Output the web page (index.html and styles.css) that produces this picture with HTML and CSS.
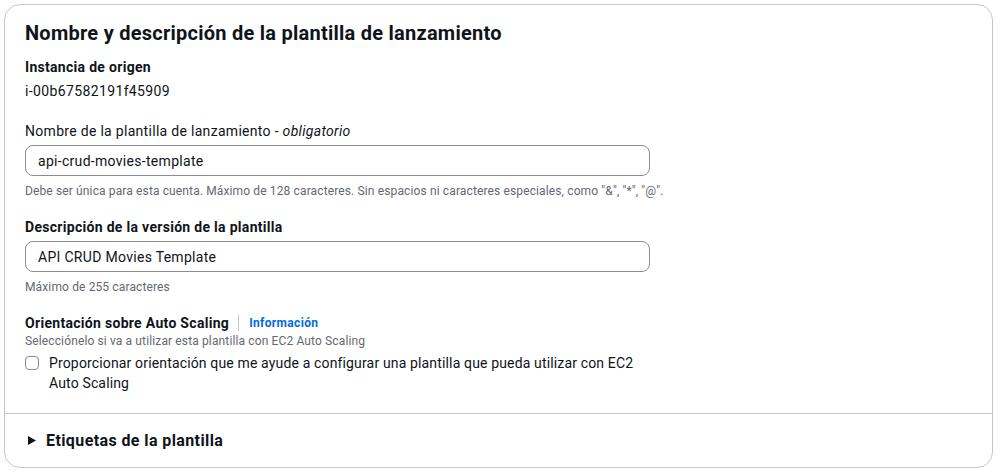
FILE: index.html
```html
<!DOCTYPE html>
<html lang="es">
<head>
<meta charset="utf-8">
<link rel="stylesheet" href="styles.css">
</head>
<body>
<div class="container">
  <div class="main">
    <h2 class="title">Nombre y descripción de la plantilla de lanzamiento</h2>
    <div class="field field-info">
      <div class="label bold">Instancia de origen</div>
      <div class="value">i-00b67582191f45909</div>
    </div>
    <div class="field">
      <div class="label">Nombre de la plantilla de lanzamiento - <i>obligatorio</i></div>
      <div class="input">api-crud-movies-template</div>
      <div class="hint">Debe ser única para esta cuenta. Máximo de 128 caracteres. Sin espacios ni caracteres especiales, como "&amp;", "*", "@".</div>
    </div>
    <div class="field">
      <div class="label bold">Descripción de la versión de la plantilla</div>
      <div class="input">API CRUD Movies Template</div>
      <div class="hint">Máximo de 255 caracteres</div>
    </div>
    <div class="field last">
      <div class="label-row">
        <span class="label bold">Orientación sobre Auto Scaling</span>
        <span class="sep"></span>
        <a class="info">Información</a>
      </div>
      <div class="hint desc">Selecciónelo si va a utilizar esta plantilla con EC2 Auto Scaling</div>
      <label class="check">
        <span class="box"></span>
        <span class="check-text">Proporcionar orientación que me ayude a configurar una plantilla que pueda utilizar con EC2 Auto Scaling</span>
      </label>
    </div>
  </div>
  <div class="footer">
    <svg class="caret" width="8" height="9" viewBox="0 0 8 9"><path d="M0 0 L8 4.5 L0 9 Z" fill="#0f141a"/></svg>
    <span class="footer-title">Etiquetas de la plantilla</span>
  </div>
</div>
</body>
</html>
```
FILE: styles.css
```css
* { box-sizing: border-box; }
body {
  margin: 0;
  padding: 4px;
  background: #ffffff;
  font-family: Roboto, "Open Sans", sans-serif;
  color: #0f141a;
  font-size: 14px;
  letter-spacing: 0.3px;
}
.container {
  width: 989px;
  height: 464px;
  border: 1px solid #c6c6cd;
  border-radius: 16px;
  display: flex;
  flex-direction: column;
}
.main {
  padding: 16px 20px 20px 20px;
  border-bottom: 1px solid #c6c6cd;
  flex: 1;
}
.title {
  margin: 0 0 12px 0;
  font-size: 20px;
  font-weight: 700;
  line-height: 24px;
  letter-spacing: 0.25px;
}
.field { margin-bottom: 18px; }
.field-info { margin-bottom: 20px; }
.field.last { margin-bottom: 0; }
.label { line-height: 20px; }
.bold { font-weight: 700; }
.value { line-height: 20px; margin-top: 4px; letter-spacing: 0.37px; }
.input {
  margin-top: 4px;
  width: 625px;
  height: 31px;
  border: 1px solid #8c8c94;
  border-radius: 8px;
  padding: 1px 12px 0 12px;
  line-height: 29px;
  overflow: hidden;
}
.hint {
  font-size: 12px;
  color: #656871;
  line-height: 16px;
  margin-top: 7px;
  letter-spacing: 0.13px;
}
.label-row { display: flex; align-items: center; line-height: 20px; }
.sep { width: 1px; height: 16px; background: #c6c6cd; margin: 0 10px 0 9px; }
.info { color: #006ce0; font-weight: 700; font-size: 12px; letter-spacing: 0.35px; }
.hint.desc { margin-top: 0; }
.check {
  display: flex;
  align-items: flex-start;
  margin-top: 4px;
  width: 620px;
}
.box {
  flex: none;
  width: 14px;
  height: 14px;
  border: 1px solid #8c8c94;
  border-radius: 4px;
  margin: 3px 10px 0 0;
}
.check-text { line-height: 20px; letter-spacing: 0.15px; }
.footer {
  height: 54px;
  display: flex;
  align-items: center;
  padding: 0 22px 0 23px;
  gap: 10px;
}
.footer-title { font-size: 16px; font-weight: 700; letter-spacing: 0.4px; }
```
